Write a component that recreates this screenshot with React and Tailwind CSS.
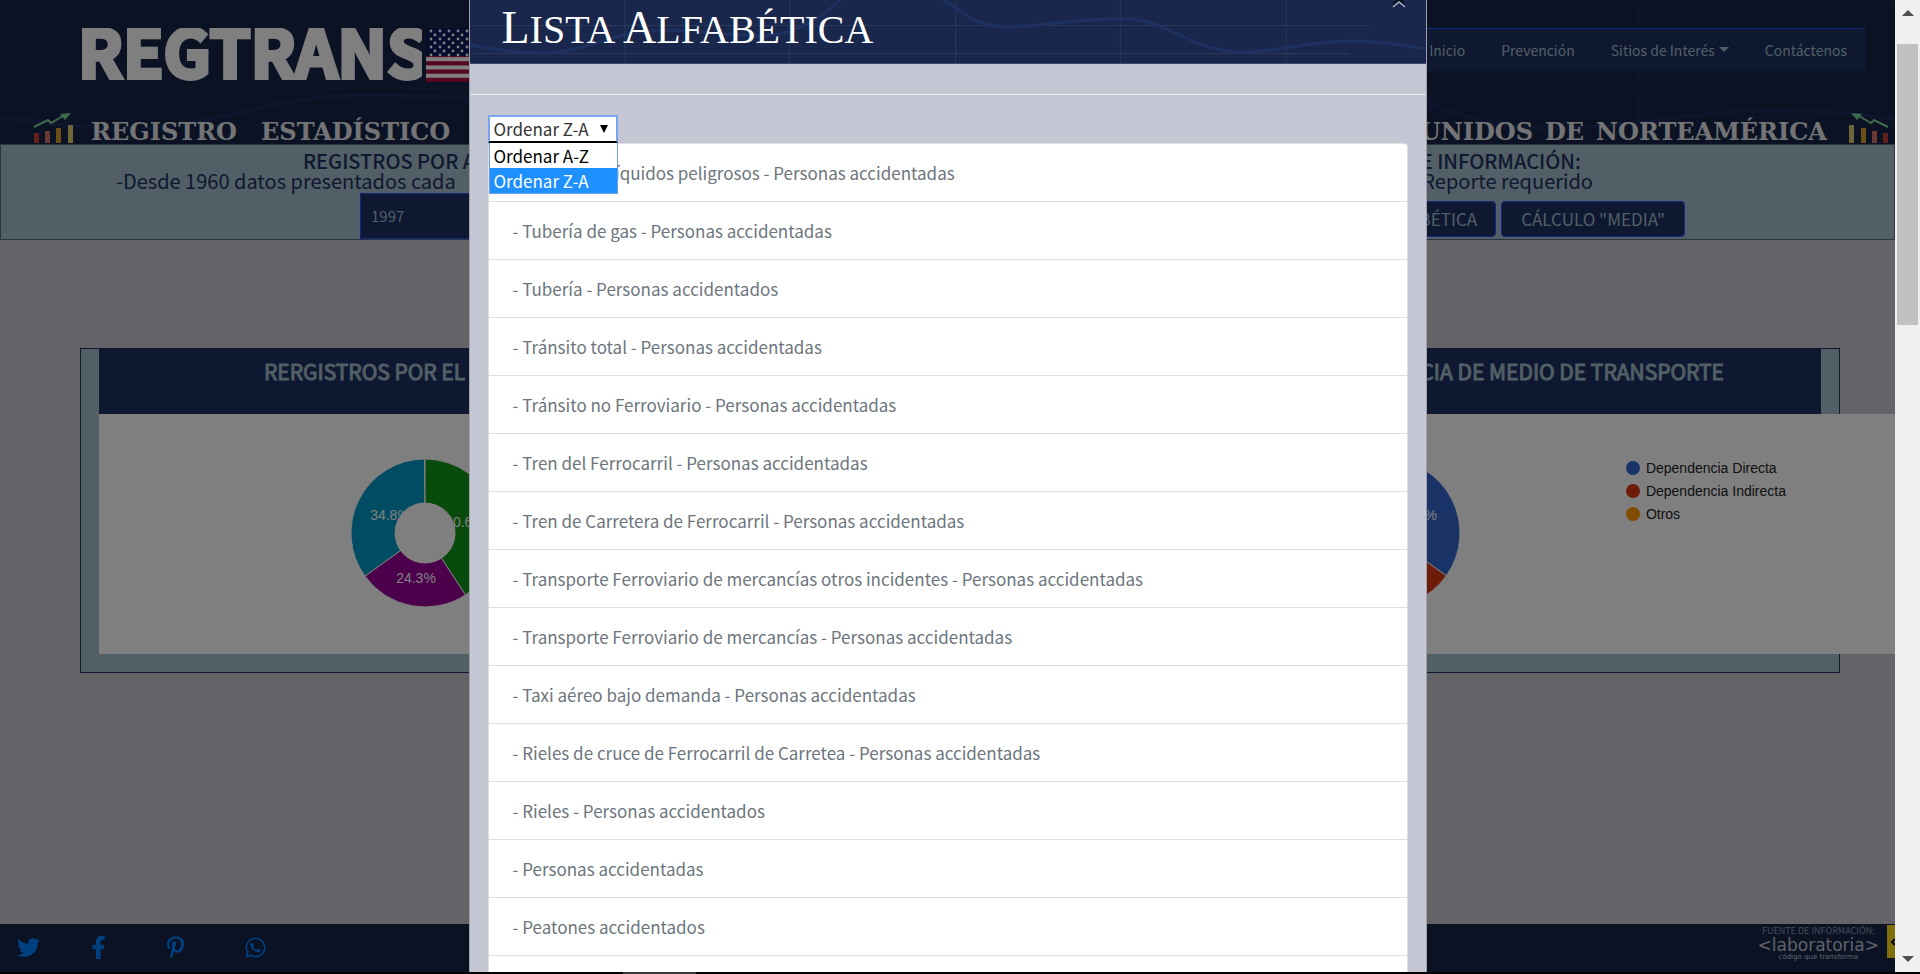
import React from "react";
import { FaTwitter, FaFacebookF, FaPinterestP, FaWhatsapp } from "react-icons/fa";

const sans = "font-['Noto_Sans_CJK_SC',sans-serif]";

const items = [
  "Tubería de líquidos peligrosos - Personas accidentadas",
  "Tubería de gas - Personas accidentadas",
  "Tubería - Personas accidentados",
  "Tránsito total - Personas accidentadas",
  "Tránsito no Ferroviario - Personas accidentadas",
  "Tren del Ferrocarril - Personas accidentadas",
  "Tren de Carretera de Ferrocarril - Personas accidentadas",
  "Transporte Ferroviario de mercancías otros incidentes - Personas accidentadas",
  "Transporte Ferroviario de mercancías - Personas accidentadas",
  "Taxi aéreo bajo demanda - Personas accidentadas",
  "Rieles de cruce de Ferrocarril de Carretea - Personas accidentadas",
  "Rieles - Personas accidentados",
  "Personas accidentadas",
  "Peatones accidentados",
];

function Flag() {
  const stars = [];
  for (let r = 0; r < 7; r++) {
    for (let c = 0; c < 8; c++) {
      stars.push(<circle key={r + "-" + c} cx={5 + c * 9 + (r % 2 ? 4 : 0)} cy={3 + r * 4} r="1.4" fill="#fff" />);
    }
  }
  return (
    <svg width="96" height="54" viewBox="0 0 96 54" aria-hidden="true">
      <rect width="96" height="54" fill="#fff" />
      {[0, 1, 2, 3, 4, 5, 6].map((i) => (
        <rect key={i} y={i * 8.3} width="96" height="4.2" fill="#a8103c" />
      ))}
      <rect width="72" height="28" fill="#101a5c" />
      {stars}
    </svg>
  );
}

function Bars({ flip }) {
  return (
    <svg width="42" height="32" viewBox="0 0 42 32" aria-hidden="true">
      <g transform={flip ? "translate(42 0) scale(-1 1)" : undefined}>
        <rect x="1" y="21" width="5" height="10" fill="#c2403a" />
        <rect x="12" y="19" width="5" height="12" fill="#d97068" />
        <rect x="23" y="16" width="5" height="15" fill="#d8a030" />
        <rect x="35" y="13" width="5" height="18" fill="#d8cc70" />
        <path d="M1 15 L15 8 L18 11 L30 4" fill="none" stroke="#7fd49a" strokeWidth="2" />
        <path d="M27 2 L38 1 L32 8 Z" fill="#7fd49a" />
      </g>
    </svg>
  );
}

function arc(cx, cy, r0, r1, a, b) {
  const p = (r, t) => {
    const g = t * 2 * Math.PI;
    return (cx + r * Math.sin(g)).toFixed(2) + " " + (cy - r * Math.cos(g)).toFixed(2);
  };
  const big = b - a > 0.5 ? 1 : 0;
  return `M${p(r1, a)} A${r1} ${r1} 0 ${big} 1 ${p(r1, b)} L${p(r0, b)} A${r0} ${r0} 0 ${big} 0 ${p(r0, a)} Z`;
}

function Donut({ slices, labels }) {
  return (
    <svg width="150" height="150" viewBox="0 0 150 150" role="img" aria-label="Gráfico circular">
      {slices.map((s) => (
        <path key={s[2]} d={arc(75, 75, 30, 74, s[0], s[1])} fill={s[2]} stroke="#fff" />
      ))}
      {labels.map((l) => (
        <text key={l[2]} x={l[0]} y={l[1]} fill="#fff" textAnchor="middle" className="font-['Liberation_Sans',sans-serif] text-[14px]">
          {l[2]}
        </text>
      ))}
      <circle cx="75" cy="75" r="30" fill="#fff" />
    </svg>
  );
}

function HeaderArt() {
  return (
    <svg className="absolute inset-0 h-full w-full" viewBox="0 0 1895 144" preserveAspectRatio="none" aria-hidden="true">
      <g stroke="#1b2b4b" strokeWidth="2">
        <path d="M310 0V144 M1639 0V144 M0 88H1895 M160 4H1895" />
      </g>
      <path d="M0 117 C50 123 90 130 140 129 C220 125 270 95 370 95 C420 95 470 98 520 104" fill="none" stroke="#1b2c5a" strokeWidth="4" />
      <path d="M1380 85 C1450 112 1480 128 1560 128 C1640 127 1700 110 1780 110 C1830 111 1860 115 1895 119" fill="none" stroke="#1b2c5a" strokeWidth="4" />
    </svg>
  );
}

function ModalArt() {
  return (
    <svg className="absolute inset-0 h-full w-full" viewBox="0 0 957 63" preserveAspectRatio="none" aria-hidden="true">
      <g stroke="#2a3859" strokeWidth="1">
        <path d="M155 0V63 M320 0V63 M486 0V63 M651 0V63 M817 0V63 M0 25.500H900 M0 53.500H880" />
      </g>
      <path d="M0 45 C25 50 45 53 75 53 C125 51 140 30 200 30 C240 31 260 36 295 36 C330 32 350 20 372 -2" fill="none" stroke="#1d3160" strokeWidth="3" />
      <path d="M470 -3 C500 18 510 27 540 27 C580 25 600 19 655 19 C700 19 720 51 770 52 C820 52 830 41 885 41 C915 41 935 46 957 49" fill="none" stroke="#1d3160" strokeWidth="3" />
    </svg>
  );
}

function Legend({ color, children }) {
  return (
    <li className="flex items-center gap-1.5">
      <span className="size-3.5 rounded-full" style={{ backgroundColor: color }} />
      {children}
    </li>
  );
}

function Page() {
  return (
    <div className="flex min-h-full flex-col bg-[#c6c6d0]">
      <header className="relative flex h-36 flex-col justify-between overflow-hidden bg-[#142448]">
        <HeaderArt />
        <div className="relative flex items-start justify-between pt-7 pr-[30px] pl-20">
          <a href="#inicio" className="flex gap-1 text-white">
            <svg width="342" height="54" viewBox="0 0 342 54" role="img" aria-label="REGTRANS">
              <text x="-2" y="50" fill="#fff" stroke="#fff" strokeWidth="4" className="font-['Noto_Sans_CJK_SC',sans-serif] text-[66px] font-bold">REGTRANS</text>
            </svg>
            <Flag />
          </a>
          <nav className={"flex h-[43px] items-center gap-9 border-t border-[#224eff] bg-[#1e3062] px-[18px] text-[14px] leading-5 text-[#a4becc] " + sans}>
            <a href="#inicio">Inicio</a>
            <a href="#prevencion">Prevención</a>
            <a href="#sitios" className="flex items-center gap-1">
              Sitios de Interés
              <svg width="10" height="6" viewBox="0 0 10 6" aria-hidden="true"><path d="M0 0H10L5 5Z" fill="#a4becc" /></svg>
            </a>
            <a href="#contactenos">Contáctenos</a>
          </nav>
        </div>
        <div className="relative flex items-end justify-between pr-1.5 pl-[33px] font-['DejaVu_Serif',serif] text-[24px] leading-6 font-bold text-white/90">
          <span className="flex items-end gap-4"><Bars /><span className="flex gap-6"><span>REGISTRO</span><span>ESTADÍSTICO</span></span></span>
          <span className="flex items-end gap-5"><span className="flex gap-3"><span>UNIDOS</span><span>DE</span><span>NORTEAMÉRICA</span></span><Bars flip /></span>
        </div>
      </header>

      <section className={"flex h-24 justify-between border border-[#566a80] bg-[#a4becc] text-[20px] leading-5 text-[#1e3062] " + sans}>
        <div className="pt-1.5 pl-[115px]">
          <h2 className="pl-[187px] font-medium">REGISTROS POR AÑO</h2>
          <p>-Desde 1960 datos presentados cada</p>
          <select aria-label="Año" className="mt-0.5 ml-[244px] block h-[46px] w-60 appearance-none border border-[#224eff] bg-[#1e3062] px-2.5 text-[15px] text-[#a4becc]">
            <option>1997</option>
          </select>
        </div>
        <div className="flex flex-col items-end pt-1.5 pr-[209px]">
          <h2 className="pr-[104px] font-medium">FUENTE DE INFORMACIÓN:</h2>
          <p className="pr-[92px]">Reporte requerido</p>
          <div className="flex gap-[5px] pt-2.5 text-[17px]">
            <button type="button" className="h-9 rounded border border-[#224eff] bg-[#1e3062] px-[18px] text-[#a4becc]">LISTA ALFABÉTICA</button>
            <button type="button" className="h-9 rounded border border-[#224eff] bg-[#1e3062] px-[19px] text-[#a4becc]">CÁLCULO "MEDIA"</button>
          </div>
        </div>
      </section>

      <main className="flex-1 pt-[108px] pr-[55px] pl-20">
        <section className="border border-[#1e3062] bg-[#a4becc] px-[18px] pb-[18px]">
          <div className={"flex h-[65px] justify-between bg-[#1e3062] pt-2 pr-[97px] pl-[165px] text-[21px] leading-7 text-[#a4becc] [-webkit-text-stroke:1px_#a4becc] " + sans}>
            <h2>RERGISTROS POR EL MEDIO</h2>
            <h2>DEPENDENCIA DE MEDIO DE TRANSPORTE</h2>
          </div>
          <div className="mr-[-74px] flex h-60 justify-between bg-white pt-11 pr-[109px] pl-[251px] font-['Liberation_Sans',sans-serif] text-[14px] text-[#222]">
            <Donut
              slices={[[0, 0.408, "#109618"], [0.408, 0.651, "#990099"], [0.651, 0.999, "#0099c6"]]}
              labels={[[115, 69, "40.6%"], [66, 125, "24.3%"], [40, 62, "34.8%"]]}
            />
            <div className="flex gap-[165px]">
              <Donut
                slices={[[0, 0.348, "#3366cc"], [0.348, 0.7, "#dc3912"], [0.7, 0.999, "#ff9900"]]}
                labels={[[106, 62, "34.8%"]]}
              />
              <ul className="flex flex-col gap-[3px] leading-5">
                <Legend color="#3366cc">Dependencia Directa</Legend>
                <Legend color="#dc3912">Dependencia Indirecta</Legend>
                <Legend color="#ff9900">Otros</Legend>
              </ul>
            </div>
          </div>
        </section>
      </main>

      <footer className="flex h-12 items-start justify-between bg-[#142448]">
        <div className="flex pt-3 pl-[17px] text-[#0080ff]">
          <a href="#twitter" aria-label="Twitter" className="w-[70px]"><FaTwitter size={23} /></a>
          <a href="#facebook" aria-label="Facebook" className="w-[77px]"><FaFacebookF size={23} /></a>
          <a href="#pinterest" aria-label="Pinterest" className="w-20"><FaPinterestP size={23} /></a>
          <a href="#whatsapp" aria-label="WhatsApp"><FaWhatsapp size={23} /></a>
        </div>
        <div className="flex gap-2 pt-px">
          <div className="flex flex-col items-center text-[#c0c4d0]">
            <span className={"text-[9px] leading-3 text-[#8a9ab0] " + sans}>FUENTE DE INFORMACIÓN:</span>
            <span className="font-['DejaVu_Sans',sans-serif] text-[17px] leading-4">&lt;laboratoria&gt;</span>
            <span className="font-['DejaVu_Sans',sans-serif] text-[7px] leading-2">código que transforma</span>
          </div>
          <div className="flex h-[33px] w-2 items-center justify-end bg-[#ffe11a]">
            <svg width="4" height="8" viewBox="0 0 4 8" aria-hidden="true"><path d="M4 1L1 4L4 7" fill="none" stroke="#000" strokeWidth="2" /></svg>
          </div>
        </div>
      </footer>
    </div>
  );
}

function Modal() {
  return (
    <div role="dialog" aria-modal="true" aria-label="Lista Alfabética" className="w-full max-w-[958px] border-x border-black/20 bg-[#c5c8d4]">
      <div className="relative h-16 overflow-hidden border-b border-[#3e4c6c] bg-[#18274b]">
        <ModalArt />
        <h1 className="relative pl-8 font-['Liberation_Serif',serif] text-[40px] leading-[55px] text-white">
          <span className="text-[46px]">L</span>ISTA <span className="text-[46px]">A</span>LFABÉTICA
        </h1>
        <button type="button" aria-label="Cerrar" className="absolute top-0 right-5">
          <svg width="14" height="8" viewBox="0 0 14 8" fill="none" strokeWidth="2" aria-hidden="true">
            <path d="M1 4 L7 -1 L13 4" stroke="#0b1020" />
            <path d="M1 7 L7 2 L13 7" stroke="#a9b0c2" strokeWidth="1.5" />
          </svg>
        </button>
      </div>
      <div className="h-[31px] border-b border-[#e9ecef]" />
      <div className={"px-[18px] pt-5 " + sans}>
        <div className="relative w-[130px]">
          <select aria-label="Ordenar" defaultValue="za" className="block h-7 w-full appearance-none rounded-none border-2 border-[#7aa5ec] border-b-black bg-white pl-1 text-[17px] leading-6 text-[#333] outline-none">
            <option value="az">Ordenar A-Z</option>
            <option value="za">Ordenar Z-A</option>
          </select>
          <svg className="pointer-events-none absolute top-2.5 right-2.5" width="8" height="8" viewBox="0 0 8 8" aria-hidden="true"><path d="M0 0H8L4 8Z" fill="#000" /></svg>
          <ul role="listbox" aria-label="Opciones de orden" className="absolute top-full left-px z-10 w-[129px] border border-t-0 border-[#6f9be0] bg-white text-[17px] leading-[25px] text-black">
            <li role="option" aria-selected="false" className="px-1">Ordenar A-Z</li>
            <li role="option" aria-selected="true" className="bg-[#1e90ff] px-1 text-white">Ordenar Z-A</li>
          </ul>
        </div>
        <ul className="rounded-t border border-[#dfdfdf] bg-white text-[17px] text-[#6c757d]">
          {items.map((t) => (
            <li key={t} className="border-b border-[#dfdfdf] px-6 py-4 leading-[25px]">- {t}</li>
          ))}
          <li className="h-6" />
        </ul>
      </div>
    </div>
  );
}

export default function App() {
  return (
    <div className="flex h-screen flex-col bg-black">
      <div className="flex min-h-0 flex-1">
        <div className="relative min-w-0 flex-1 overflow-hidden">
          <Page />
          <div className="absolute inset-0 flex justify-center overflow-hidden bg-black/50">
            <Modal />
          </div>
        </div>
        <div className="flex w-[25px] flex-col items-center bg-[#f0f0f0] py-2.5" aria-hidden="true">
          <svg width="12" height="6" viewBox="0 0 12 6"><path d="M0 6L6 0L12 6Z" fill="#505050" /></svg>
          <span className="mt-7 h-[281px] w-[21px] bg-[#c1c1c1]" />
          <svg className="mt-auto" width="12" height="6" viewBox="0 0 12 6"><path d="M0 0L6 6L12 0Z" fill="#505050" /></svg>
        </div>
      </div>
      <div className="flex h-0.5 bg-black pl-[623px]"><span className="w-[73px] bg-[#3a3a3a]" /></div>
    </div>
  );
}
